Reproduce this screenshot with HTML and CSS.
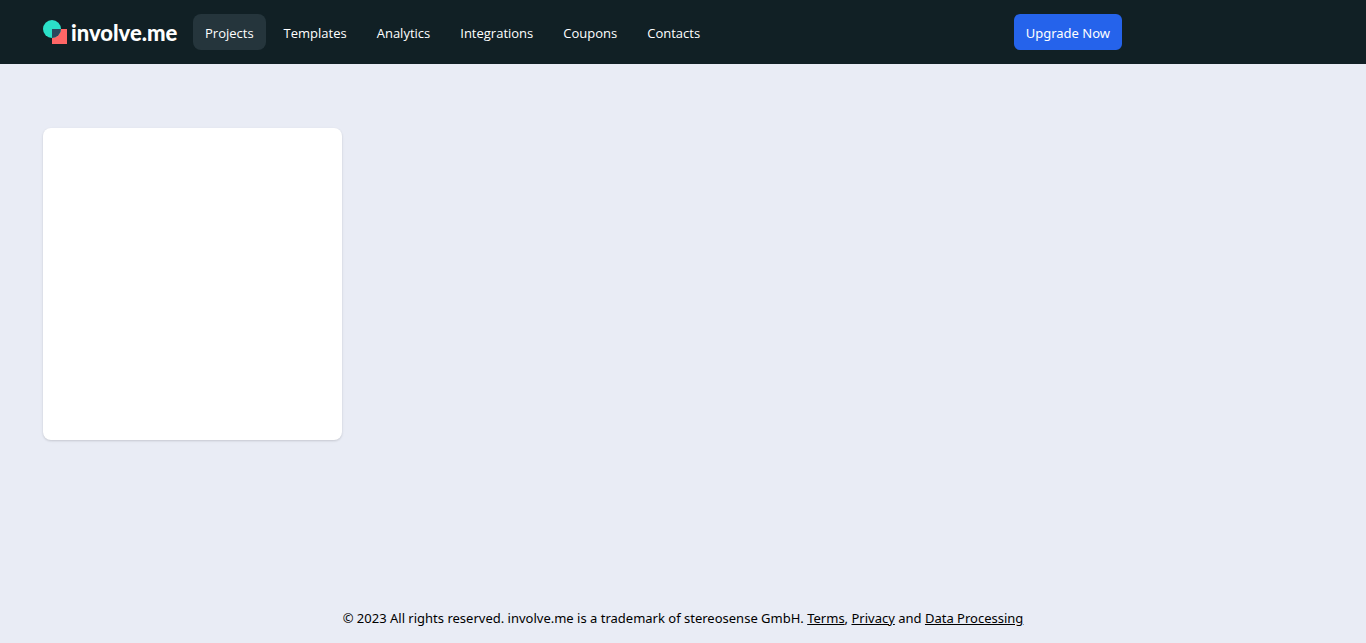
FILE: index.html
```html
<!DOCTYPE html>
<html lang="en">
<head>
<meta charset="utf-8">
<meta name="viewport" content="width=device-width, initial-scale=1">
<title>Projects - involve.me</title>
<link rel="stylesheet" href="styles.css">
</head>
<body>
<header class="topbar">
  <div class="container topbar-inner">
    <a class="logo" href="#">
      <svg class="logo-mark" viewBox="0 0 24 24" aria-hidden="true">
        <defs><clipPath id="overlap"><circle cx="9" cy="9" r="9"/></clipPath></defs>
        <path fill="#ff6666" d="M9 9h15v15H9z"/>
        <circle cx="9" cy="9" r="9" fill="#2be0c8"/>
        <path fill="#2b485d" clip-path="url(#overlap)" d="M9 9h15v15H9z"/>
      </svg>
      <span class="logo-name">involve.me</span>
    </a>
    <nav class="nav" aria-label="Main">
      <a class="nav-link active" href="#" aria-current="page">Projects</a>
      <a class="nav-link" href="#">Templates</a>
      <a class="nav-link" href="#">Analytics</a>
      <a class="nav-link" href="#">Integrations</a>
      <a class="nav-link" href="#">Coupons</a>
      <a class="nav-link" href="#">Contacts</a>
    </nav>
    <button class="upgrade" type="button">Upgrade Now</button>
  </div>
</header>
<main class="container content">
  <div class="card"></div>
</main>
<footer class="footer">© 2023 All rights reserved. involve.me is a trademark of stereosense GmbH. <a href="#">Terms</a>, <a href="#">Privacy</a> and <a href="#">Data Processing</a></footer>
</body>
</html>
```
FILE: styles.css
```css
* {
  box-sizing: border-box;
}

body {
  margin: 0;
  min-height: 100vh;
  display: flex;
  flex-direction: column;
  background: #e9ecf5;
  color: #000;
  font: 13px/20px "Segoe UI", "Noto Sans", sans-serif;
}

.container {
  width: 100%;
  max-width: 1280px;
  margin: 0 auto;
}

.topbar {
  background: #112025;
}

.topbar-inner {
  display: flex;
  align-items: center;
  height: 64px;
}

.logo {
  display: flex;
  flex: none;
  align-items: center;
  gap: 4px;
  width: 134px;
  margin-right: 16px;
  color: #fff;
  text-decoration: none;
}

.logo-mark {
  flex: none;
  width: 24px;
  height: 24px;
}

.logo-name {
  padding-top: 2px;
  font: 900 22px/24px "Lato", sans-serif;
}

.nav {
  display: flex;
  gap: 6px;
  font-family: "Segoe UI", "Open Sans", sans-serif;
}

.nav-link {
  padding: 9px 12px 7px;
  border-radius: 8px;
  color: #fff;
  text-decoration: none;
}

.nav-link.active {
  background: #25353c;
}

.upgrade {
  margin-left: auto;
  margin-right: 201px;
  padding: 9px 12px 7px;
  border: 0;
  border-radius: 6px;
  background: #2563eb;
  color: #fff;
  font: inherit;
}

.content {
  flex: 1;
  padding: 64px 0;
}

.card {
  width: 299px;
  height: 312px;
  border-radius: 8px;
  background: #fff;
  box-shadow: 0 1px 3px rgba(0, 0, 0, 0.1), 0 1px 2px rgba(0, 0, 0, 0.06);
}

.footer {
  padding: 0 16px 15px;
  text-align: center;
}

.footer a {
  color: inherit;
  text-decoration: underline;
}
```
